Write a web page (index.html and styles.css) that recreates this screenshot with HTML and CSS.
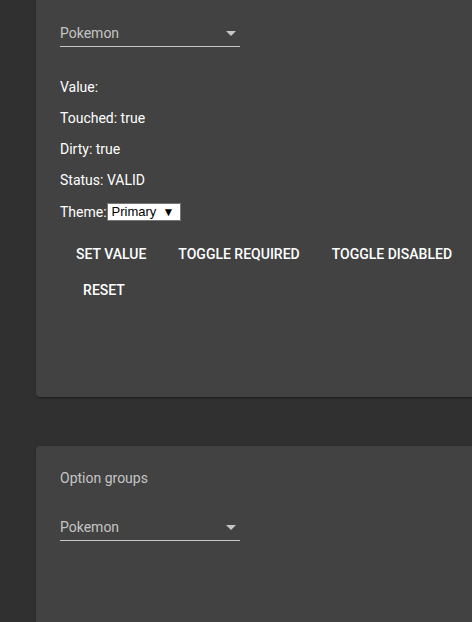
FILE: index.html
```html
<!DOCTYPE html>
<html>
<head>
<meta charset="utf-8">
<link rel="stylesheet" href="styles.css">
</head>
<body>
<div class="page">
  <section class="card card-first">
    <div class="select">
      <span class="select-value">Pokemon</span>
      <span class="select-arrow"></span>
    </div>
    <div class="info">
      <p class="line">Value:</p>
      <p class="line">Touched: true</p>
      <p class="line">Dirty: true</p>
      <p class="line">Status: VALID</p>
      <p class="line theme">Theme:<span class="native-select">Primary<span class="native-arrow">▼</span></span></p>
    </div>
    <div class="buttons">
      <button class="btn">SET VALUE</button>
      <button class="btn">TOGGLE REQUIRED</button>
      <button class="btn">TOGGLE DISABLED</button>
      <button class="btn">RESET</button>
    </div>
  </section>
  <section class="card card-second">
    <h2 class="card-title">Option groups</h2>
    <div class="select">
      <span class="select-value">Pokemon</span>
      <span class="select-arrow"></span>
    </div>
  </section>
</div>
</body>
</html>
```
FILE: styles.css
```css
html, body {
  margin: 0;
  padding: 0;
  background: #303030;
  height: 100%;
  overflow: hidden;
}
body {
  font-family: Roboto, "Liberation Sans", sans-serif;
  font-size: 14px;
  color: #fff;
}
.page {
  padding-left: 36px;
  display: flex;
  flex-direction: column;
  gap: 49px;
}
.card {
  background: #424242;
  border-radius: 4px;
  box-shadow: 0 2px 1px -1px rgba(0,0,0,.2), 0 1px 1px 0 rgba(0,0,0,.14), 0 1px 3px 0 rgba(0,0,0,.12);
  padding: 0 24px;
  width: 480px;
  box-sizing: border-box;
}
.card-first {
  border-top-left-radius: 0;
  border-top-right-radius: 0;
  padding-top: 22px;
  height: 397px;
}
.card-second {
  padding-top: 24px;
  height: 200px;
}
.card-title {
  margin: 0;
  font-size: 14px;
  font-weight: 400;
  line-height: 16px;
  color: rgba(255,255,255,.7);
}
.card-second .select {
  margin-top: 30px;
}
.select {
  width: 180px;
  height: 25px;
  border-bottom: 1px solid rgba(255,255,255,.7);
  display: flex;
  align-items: center;
  justify-content: space-between;
  box-sizing: border-box;
  padding-bottom: 2px;
}
.select-value {
  color: rgba(255,255,255,.7);
  font-size: 14px;
  line-height: 16px;
}
.select-arrow {
  width: 0;
  height: 0;
  border-left: 5px solid transparent;
  border-right: 5px solid transparent;
  border-top: 5px solid rgba(255,255,255,.7);
  margin-right: 4px;
}
.info {
  padding-top: 32px;
  display: flex;
  flex-direction: column;
  gap: 15px;
}
.line {
  margin: 0;
  line-height: 16px;
  font-size: 14px;
  color: #fff;
}
.theme {
  display: flex;
  align-items: center;
}
.native-select {
  display: inline-flex;
  align-items: center;
  background: #fff;
  color: #000;
  font-family: "Liberation Sans", Arial, sans-serif;
  font-size: 13px;
  line-height: 16px;
  height: 18px;
  box-sizing: border-box;
  border: 1px solid #767676;
  padding: 0 4px 0 4px;
  width: 74px;
}
.native-arrow {
  font-size: 12px;
  margin-left: 6px;
}
.buttons {
  margin-top: 15px;
  display: flex;
  flex-wrap: wrap;
  width: 420px;
}
.btn {
  background: none;
  border: none;
  color: #fff;
  font-family: Roboto, "Liberation Sans", sans-serif;
  font-size: 14px;
  font-weight: 500;
  height: 36px;
  min-width: 88px;
  padding: 0 16px;
  line-height: 36px;
  cursor: pointer;
}
```
